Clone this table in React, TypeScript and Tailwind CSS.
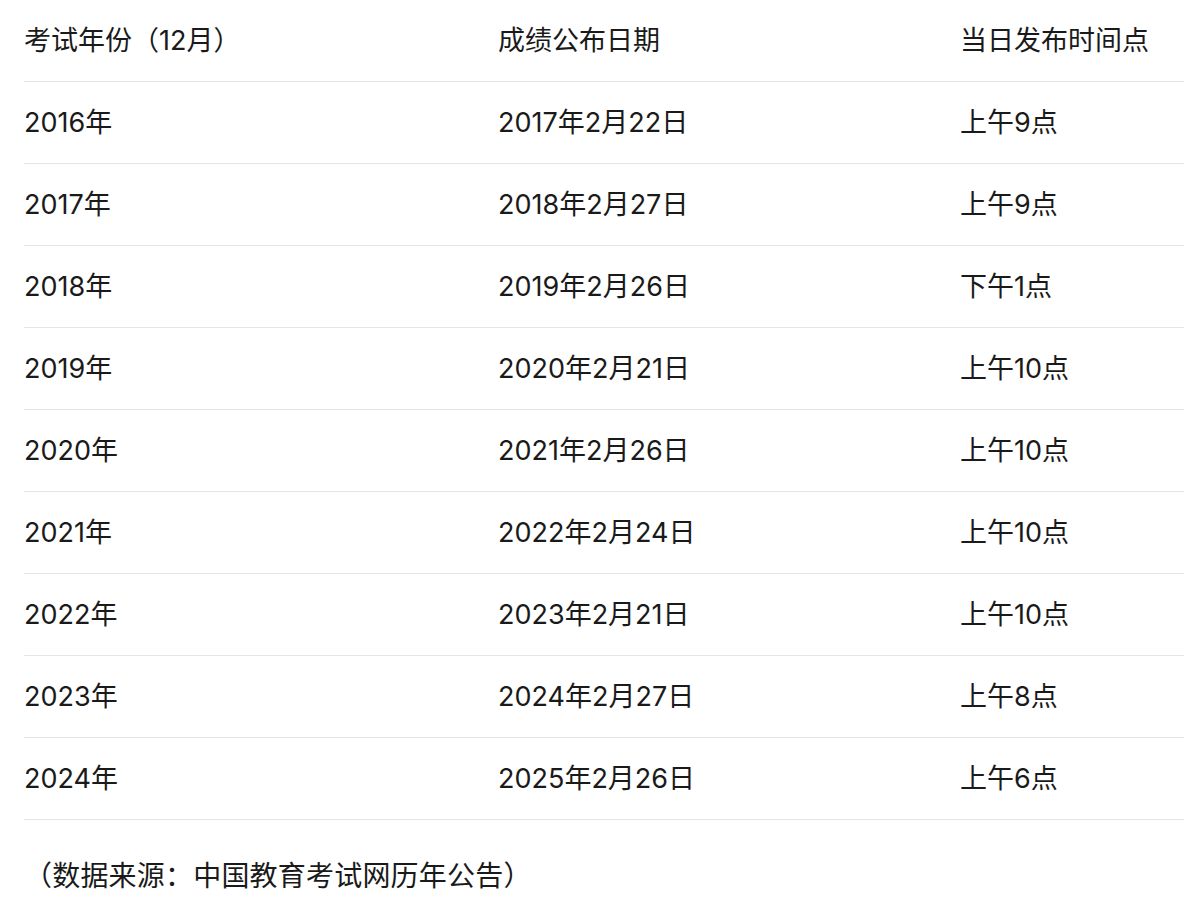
import React from "react";

const rows: [string, string, string][] = [
  ["2016年", "2017年2月22日", "上午9点"],
  ["2017年", "2018年2月27日", "上午9点"],
  ["2018年", "2019年2月26日", "下午1点"],
  ["2019年", "2020年2月21日", "上午10点"],
  ["2020年", "2021年2月26日", "上午10点"],
  ["2021年", "2022年2月24日", "上午10点"],
  ["2022年", "2023年2月21日", "上午10点"],
  ["2023年", "2024年2月27日", "上午8点"],
  ["2024年", "2025年2月26日", "上午6点"],
];

export default function App() {
  return (
    <div
      className="w-[1184px] h-[912px] bg-white pl-[24px] text-[#1a1a1a] text-[27px]"
      style={{ fontFamily: 'Inter, "Noto Sans CJK SC", sans-serif' }}
    >
      <div className="grid grid-cols-[474px_462px_224px]">
        {["考试年份（12月）", "成绩公布日期", "当日发布时间点"].map((h) => (
          <div key={h} className="h-[82px] pt-[2px] border-b border-[#e5e5e5] flex items-center">
            {h}
          </div>
        ))}
        {rows.map((r) =>
          r.map((c, i) => (
            <div key={r[0] + i} className="h-[82px] pt-[2px] border-b border-[#e5e5e5] flex items-center">
              {c}
            </div>
          ))
        )}
      </div>
      <div className="pt-[36px] leading-[40px] text-[28px] tracking-[0.2px]">（数据来源：中国教育考试网历年公告）</div>
    </div>
  );
}
